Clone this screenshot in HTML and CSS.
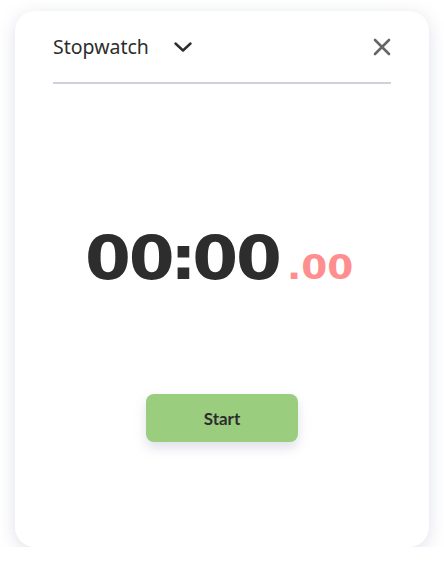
FILE: index.html
```html
<!DOCTYPE html>
<html>
<head>
<meta charset="utf-8">
<link rel="stylesheet" href="styles.css">
</head>
<body>
<div class="card">
  <div class="header">
    <div class="title">Stopwatch</div>
    <svg class="chevron" width="18" height="10" viewBox="0 0 18 10"><path d="M1.5 1.5 L9 8.5 L16.5 1.5" fill="none" stroke="#2d2d2d" stroke-width="2.4" stroke-linecap="round" stroke-linejoin="round"/></svg>
    <svg class="close" width="18" height="18" viewBox="0 0 18 18"><path d="M2 2 L16 16 M16 2 L2 16" fill="none" stroke="#666666" stroke-width="2.6" stroke-linecap="round"/></svg>
  </div>
  <div class="timer">
    <span class="main">0<span class="pre">0</span><span class="colon">:</span>00</span><span class="ms">.00</span>
  </div>
  <div class="actions">
    <button class="start">Start</button>
  </div>
</div>
</body>
</html>
```
FILE: styles.css
```css
html, body {
  margin: 0;
  padding: 0;
  background: #ffffff;
}
body {
  padding: 11px 15px 0 15px;
  width: 444px;
  box-sizing: border-box;
}
.card {
  height: 536px;
  box-sizing: border-box;
  border-radius: 20px;
  background: #ffffff;
  box-shadow: 0 4px 18px rgba(110, 120, 160, 0.22);
  padding: 0 38px;
  display: flex;
  flex-direction: column;
}
.header {
  height: 71px;
  display: flex;
  align-items: center;
  border-bottom: 2px solid #d2d1db;
}
.title {
  font-family: "Noto Sans", sans-serif;
  font-size: 19.5px;
  color: #2d2d2d;
}
.chevron {
  margin-left: 25px;
}
.close {
  margin-left: auto;
}
.timer {
  margin-top: 144px;
  display: flex;
  justify-content: center;
  align-items: baseline;
  font-family: "DejaVu Sans", sans-serif;
  font-weight: bold;
  line-height: 1;
}
.main {
  display: inline-block;
  font-size: 60px;
  color: #2d2d2d;
  letter-spacing: -2px;
  transform: scaleX(1.1);
  transform-origin: left center;
  margin-right: 25.1px;
}
.pre {
  letter-spacing: -4px;
}
.colon {
  letter-spacing: -4px;
}
.ms {
  display: inline-block;
  font-size: 34px;
  color: #ff8e8e;
  transform: scaleX(1.1);
  transform-origin: left center;
  margin-right: 12.2px;
}
.actions {
  display: flex;
  justify-content: center;
  margin-top: 106px;
}
.start {
  width: 152px;
  height: 48px;
  border: none;
  border-radius: 8px;
  background: #9bcd7f;
  color: #2d2d2d;
  font-family: "Lato", sans-serif;
  font-weight: 700;
  font-size: 17px;
  box-shadow: 0 6px 12px rgba(110, 120, 160, 0.22);
}
```
